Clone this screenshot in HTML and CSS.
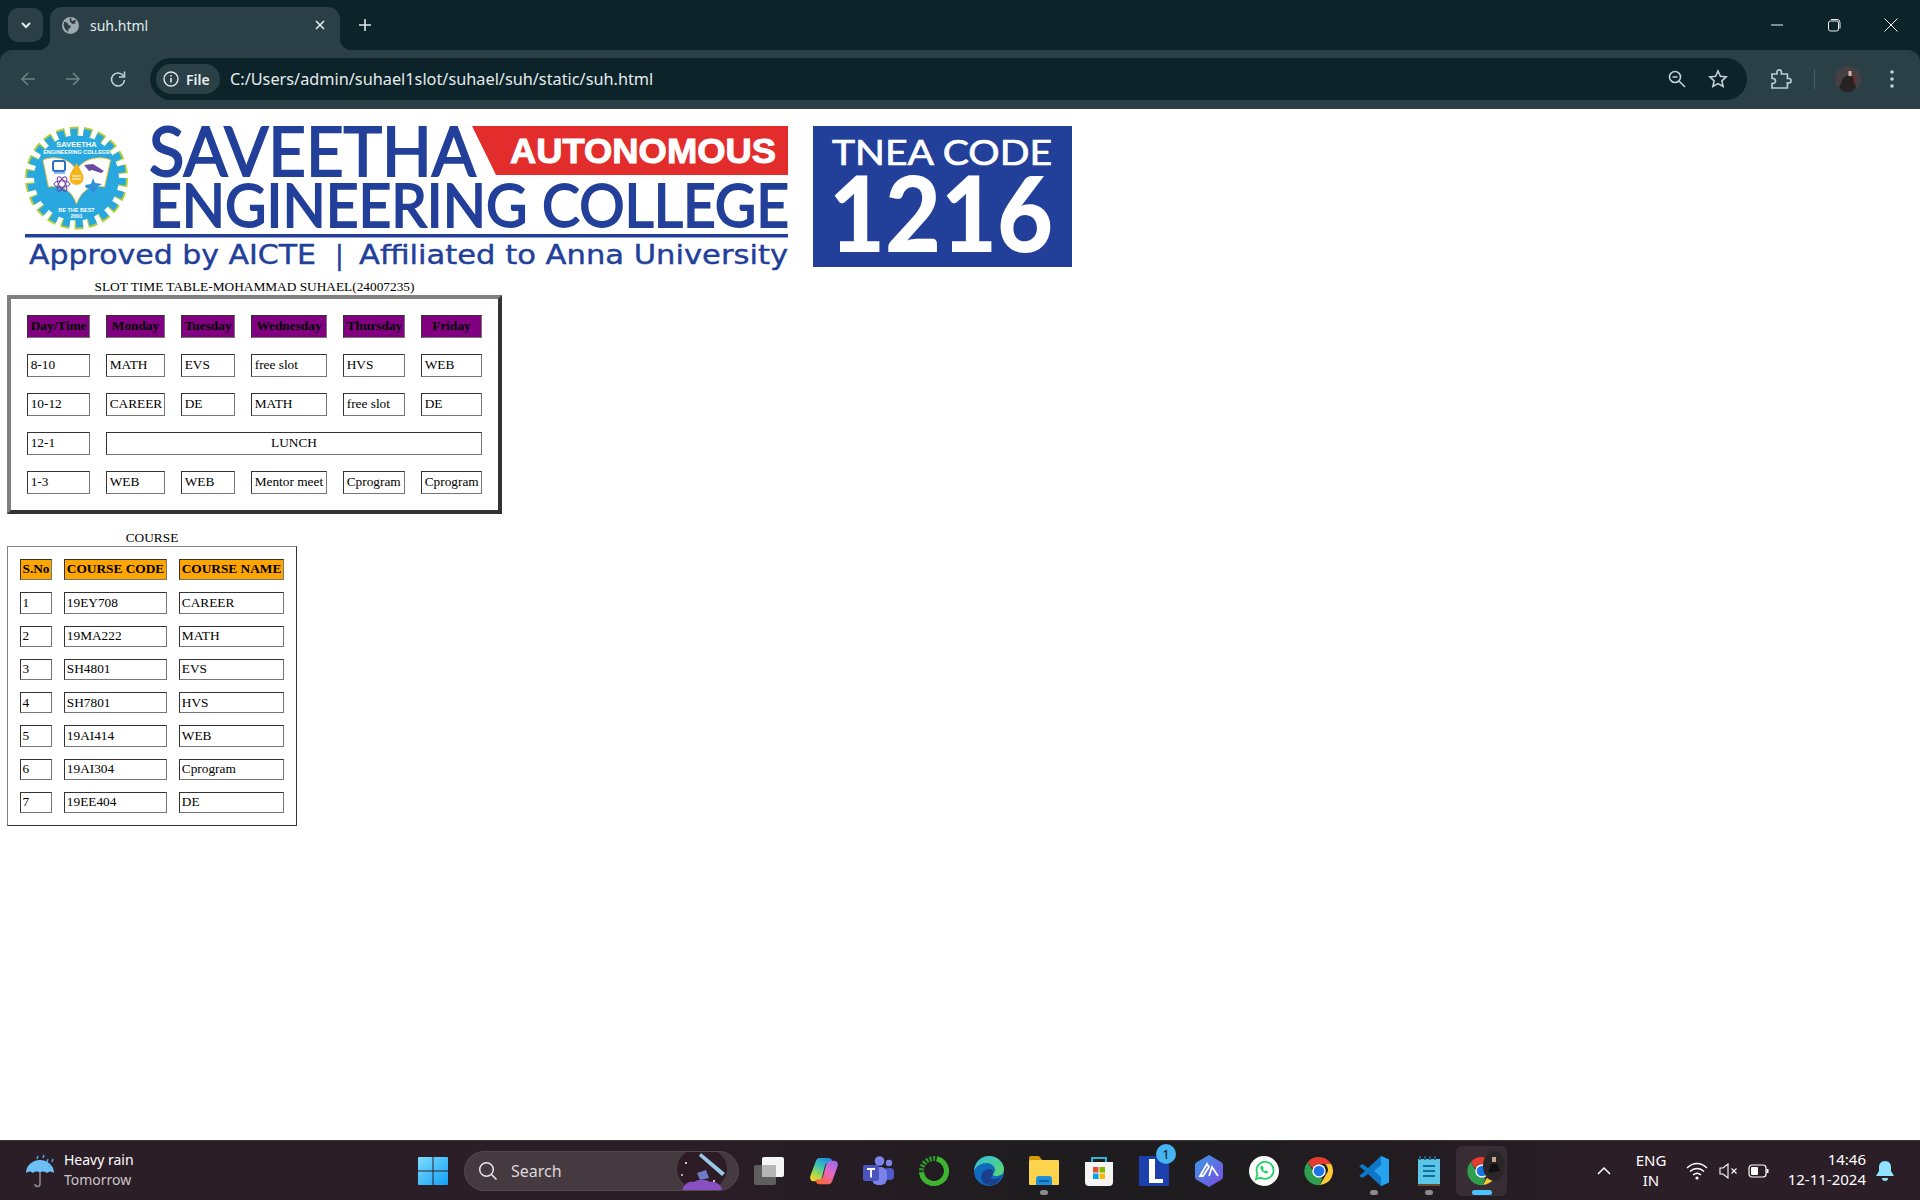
FILE: index.html
```html
<!DOCTYPE html>
<html lang="en">
<head>
    <meta charset="UTF-8">
    <title>suh.html</title>
    <link rel="stylesheet" href="styles.css">
</head>
<body>

<svg class="defs" width="0" height="0">
    <defs>
        <symbol id="chrome-logo" viewBox="0 0 32 32">
            <path d="M16 1a15 15 0 0 1 13 7.500H16a7.500 7.500 0 0 0-7 4.800L4 6.300A15 15 0 0 1 16 1z" fill="#e33b2e"/>
            <path d="M29 8.500A15 15 0 0 1 17 31l6.500-11.200a7.500 7.500 0 0 0-1-11.300z" fill="#fcc934"/>
            <path d="M4 6.300l6.500 11.300a7.500 7.500 0 0 0 9.500 5.300L17 31A15 15 0 0 1 4 6.300z" fill="#2f9e4f"/>
            <circle cx="16" cy="16" r="7.200" fill="#fff"/>
            <circle cx="16" cy="16" r="5.700" fill="#1a73e8"/>
        </symbol>
    </defs>
</svg>

<header class="browser">
    <div class="tabstrip">
        <div class="tab-search">
            <svg width="12" height="12" viewBox="0 0 12 12"><path d="M2 4l4 4 4-4" fill="none" stroke="#e4ecee" stroke-width="2"/></svg>
        </div>
        <div class="tab">
            <svg class="favicon" width="17" height="17" viewBox="0 0 16 16">
                <circle cx="8" cy="8" r="8" fill="#9eaaae"/>
                <path d="M2 4.500l3 1 1 2 2 .5v2l-2 1v3L3 11.500 1.500 8zM9 .8l-.5 2L10.500 4l1-1.500 1.500 .5L12.500 6l-2.500.5L8 5l-1-2.500L8 .8z" fill="#2a4046"/>
            </svg>
            <span class="tab-title">suh.html</span>
            <svg class="tab-close" width="12" height="12" viewBox="0 0 12 12"><path d="M2 2l8 8M10 2l-8 8" stroke="#e4ecee" stroke-width="1.600"/></svg>
        </div>
        <svg class="new-tab" width="16" height="16" viewBox="0 0 16 16"><path d="M8 2v12M2 8h12" stroke="#dfe7e9" stroke-width="1.600"/></svg>
        <div class="window-controls">
            <svg width="46" height="16" viewBox="0 0 46 16"><path d="M17 8h12" stroke="#f2f2f2" stroke-width="1"/></svg>
            <svg width="46" height="16" viewBox="0 0 46 16"><rect x="17.500" y="4" width="10" height="10" rx="2" fill="none" stroke="#f2f2f2"/><path d="M20 2.500h6a3 3 0 0 1 3 3v6" fill="none" stroke="#f2f2f2"/></svg>
            <svg width="46" height="16" viewBox="0 0 46 16"><path d="M16.500 1.500l13 13M29.500 1.500l-13 13" stroke="#f2f2f2" stroke-width="1"/></svg>
        </div>
    </div>
    <div class="toolbar">
        <div class="nav-buttons">
            <svg width="18" height="18" viewBox="0 0 18 18"><path d="M16 9H3M9 3L3 9l6 6" fill="none" stroke="#6f8185" stroke-width="1.600"/></svg>
            <svg width="18" height="18" viewBox="0 0 18 18"><path d="M2 9h13M9 3l6 6-6 6" fill="none" stroke="#6f8185" stroke-width="1.600"/></svg>
            <svg width="18" height="18" viewBox="0 0 18 18"><path d="M14.500 6A6.500 6.500 0 1 0 15.500 10" fill="none" stroke="#c3d2d6" stroke-width="1.600"/><path d="M15.500 1.500v5.500H10" fill="none" stroke="#c3d2d6" stroke-width="1.600"/></svg>
        </div>
        <div class="omnibox">
            <div class="site-chip">
                <svg width="16" height="16" viewBox="0 0 16 16"><circle cx="8" cy="8" r="7" fill="none" stroke="#dfe7e9" stroke-width="1.400"/><path d="M8 7v4.500M8 4v1.600" stroke="#dfe7e9" stroke-width="1.600"/></svg>
                <span>File</span>
            </div>
            <span class="url">C:/Users/admin/suhael1slot/suhael/suh/static/suh.html</span>
            <div class="omni-icons">
                <svg width="18" height="18" viewBox="0 0 18 18"><circle cx="7" cy="7" r="5.500" fill="none" stroke="#c3d2d6" stroke-width="1.600"/><path d="M4.500 7h5M11 11l6 6" stroke="#c3d2d6" stroke-width="1.600"/></svg>
                <svg width="20" height="20" viewBox="0 0 20 20"><path d="M10 2l2.400 5.300 5.800 .6-4.300 3.900 1.200 5.700-5.100-2.900-5.100 2.900 1.200-5.700L1.800 7.900l5.800-.6z" fill="none" stroke="#c3d2d6" stroke-width="1.600"/></svg>
            </div>
        </div>
        <div class="toolbar-right">
            <svg class="puzzle" width="22" height="22" viewBox="0 0 22 22"><path d="M2 6h5V4a2.200 2.200 0 0 1 4.400 0v2h6v4.500h1.500a2.200 2.200 0 0 1 0 4.400h-1.500V20H2v-4.500h1a2.500 2.500 0 0 0 0-5H2z" fill="none" stroke="#b9cace" stroke-width="1.700"/></svg>
            <span class="toolbar-divider"></span>
            <svg class="avatar" width="26" height="26" viewBox="0 0 26 26">
                <circle cx="13" cy="13" r="13" fill="#454042"/>
                <path d="M4 22l4-10 5-3 5 2 3 11-5 4h-7z" fill="#272325"/>
                <rect x="13.500" y="5" width="3" height="5" fill="#d9b7a5"/>
                <path d="M19 9l1.500 5-2 3" fill="none" stroke="#8c2626" stroke-width="1.200"/>
            </svg>
            <svg class="kebab" width="6" height="20" viewBox="0 0 6 20"><circle cx="3" cy="3" r="1.800" fill="#c3d2d6"/><circle cx="3" cy="10" r="1.800" fill="#c3d2d6"/><circle cx="3" cy="17" r="1.800" fill="#c3d2d6"/></svg>
        </div>
    </div>
</header>

<main class="page">
    <svg class="college-banner" width="1080" height="169" viewBox="0 109 1080 169">
        <!-- college seal -->
        <circle cx="76.500" cy="178" r="47" fill="none" stroke="#b5cf3c" stroke-width="9" stroke-dasharray="8.500 4.920"/>
        <circle cx="76.500" cy="178" r="45.500" fill="none" stroke="#29a8e0" stroke-width="8" stroke-dasharray="7 6"/>
        <circle cx="76.500" cy="178" r="42.500" fill="#29a8e0"/>
        <text class="seal-name" x="76.500" y="147" text-anchor="middle">SAVEETHA</text>
        <text class="seal-small" x="76.500" y="153.500" text-anchor="middle">ENGINEERING COLLEGE</text>
        <path d="M43 160c12-5 27-1 33.500 10 6.500-11 22-15 34-10l-6 27c-13-3-23 3-28 17-5-14-15-20-28-17z" fill="#fff" stroke="#f5c342" stroke-width="1"/>
        <path d="M76.500 163c4 7 7 11 7 15a7 7 0 0 1-14 0c0-4 3-8 7-15z" fill="#f5b31c"/>
        <path d="M72 176h9M72 179h9" stroke="#fff" stroke-width="1"/>
        <rect x="53" y="161" width="12" height="10" rx="2" fill="#fff" stroke="#2a72c8" stroke-width="2"/>
        <path d="M54 173h11" stroke="#2a72c8" stroke-width="1"/>
        <g fill="none" stroke="#6a3aa0" stroke-width="1">
            <ellipse cx="62" cy="184" rx="8" ry="3.200"/>
            <ellipse cx="62" cy="184" rx="8" ry="3.200" transform="rotate(60 62 184)"/>
            <ellipse cx="62" cy="184" rx="8" ry="3.200" transform="rotate(120 62 184)"/>
        </g>
        <path d="M84 165l9-1 11 7-3 2-9-3-3 1z" fill="#6a4aa0"/>
        <path d="M85 185l6-1 2-6 2 5 7 1-5 3-3 7-4-5-4-1z" fill="#2f8fd8"/>
        <text class="seal-small" x="76.500" y="212" text-anchor="middle">BE THE BEST</text>
        <text class="seal-small" x="76.500" y="218" text-anchor="middle">2001</text>

        <text class="wordmark" x="149" y="176" font-size="68" textLength="327" lengthAdjust="spacingAndGlyphs">SAVEETHA</text>
        <path d="M472 126h316v49H496z" fill="#e32d2d"/>
        <text class="autonomous" x="510" y="163" font-size="35" textLength="266" lengthAdjust="spacingAndGlyphs">AUTONOMOUS</text>
        <text class="wordmark" x="149" y="227" font-size="60" textLength="640" lengthAdjust="spacingAndGlyphs">ENGINEERING COLLEGE</text>
        <rect x="25" y="234" width="763" height="3.500" fill="#22409a"/>
        <text class="approved" x="29" y="264" font-size="26" textLength="287" lengthAdjust="spacingAndGlyphs">Approved by AICTE</text>
        <text class="approved" x="335" y="264" font-size="26">|</text>
        <text class="approved" x="359" y="264" font-size="26" textLength="429" lengthAdjust="spacingAndGlyphs">Affiliated to Anna University</text>

        <rect x="813" y="126" width="259" height="141" fill="#22409a"/>
        <text class="tnea" x="832" y="165" font-size="35" textLength="220" lengthAdjust="spacingAndGlyphs">TNEA CODE</text>
        <text class="tnea-code" x="829" y="252" font-size="104" textLength="224" lengthAdjust="spacingAndGlyphs">1216</text>
    </svg>

    <table class="slot-table">
        <caption>SLOT TIME TABLE-MOHAMMAD SUHAEL(24007235)</caption>
        <colgroup>
            <col class="col-day"><col class="col-mon"><col class="col-tue"><col class="col-wed"><col class="col-thu"><col class="col-fri">
        </colgroup>
        <tr>
            <th>Day/Time</th><th>Monday</th><th>Tuesday</th><th>Wednesday</th><th>Thursday</th><th>Friday</th>
        </tr>
        <tr>
            <td>8-10</td><td>MATH</td><td>EVS</td><td>free slot</td><td>HVS</td><td>WEB</td>
        </tr>
        <tr>
            <td>10-12</td><td>CAREER</td><td>DE</td><td>MATH</td><td>free slot</td><td>DE</td>
        </tr>
        <tr>
            <td>12-1</td><td colspan="5" class="lunch">LUNCH</td>
        </tr>
        <tr>
            <td>1-3</td><td>WEB</td><td>WEB</td><td>Mentor meet</td><td>Cprogram</td><td>Cprogram</td>
        </tr>
    </table>

    <table class="course-table">
        <caption>COURSE</caption>
        <colgroup>
            <col class="col-sno"><col class="col-code"><col class="col-name">
        </colgroup>
        <tr><th>S.No</th><th>COURSE CODE</th><th>COURSE NAME</th></tr>
        <tr><td>1</td><td>19EY708</td><td>CAREER</td></tr>
        <tr><td>2</td><td>19MA222</td><td>MATH</td></tr>
        <tr><td>3</td><td>SH4801</td><td>EVS</td></tr>
        <tr><td>4</td><td>SH7801</td><td>HVS</td></tr>
        <tr><td>5</td><td>19AI414</td><td>WEB</td></tr>
        <tr><td>6</td><td>19AI304</td><td>Cprogram</td></tr>
        <tr><td>7</td><td>19EE404</td><td>DE</td></tr>
    </table>
</main>

<footer class="taskbar">
    <div class="weather">
        <svg width="32" height="34" viewBox="0 0 32 34">
            <path d="M2 19a14 13 0 0 1 28 0c-2.500-2-5-2-7 0-2.500-2-5.500-2-7 0-2-2-5-2-7 0-2-2-4.500-2-7 0z" fill="#6cc0f5"/>
            <path d="M16 19v11a2.500 2.500 0 0 1-5 0" fill="none" stroke="#8b8f93" stroke-width="1.500"/>
            <path d="M14 2l-1 3M20 1l-1 3M24 5l-1 3M29 5l-1 3M26 11l-1 2" stroke="#4fa6e8" stroke-width="1.500"/>
        </svg>
        <div class="weather-text">
            <span class="weather-now">Heavy rain</span>
            <span class="weather-when">Tomorrow</span>
        </div>
    </div>

    <svg class="start" width="30" height="30" viewBox="0 0 30 30">
        <defs>
            <linearGradient id="win-blue" x1="0" y1="0" x2="1" y2="1"><stop offset="0" stop-color="#7fdcff"/><stop offset="1" stop-color="#10a0f5"/></linearGradient>
        </defs>
        <path d="M1 1h13.500v13.500H0V2a1 1 0 0 1 1-1zM15.500 1H29a1 1 0 0 1 1 1v12.500H15.500zM0 15.500h14.500V29H1a1 1 0 0 1-1-1zM15.500 15.500H30V28a1 1 0 0 1-1 1H15.500z" fill="url(#win-blue)"/>
    </svg>

    <div class="search-pill">
        <svg width="20" height="20" viewBox="0 0 20 20"><circle cx="8.500" cy="8.500" r="6.800" fill="none" stroke="#e8e6e7" stroke-width="1.500"/><path d="M13.500 13.500l5 5" stroke="#e8e6e7" stroke-width="1.600"/></svg>
        <span>Search</span>
        <svg class="search-art" width="52" height="40" viewBox="0 0 52 40">
            <ellipse cx="26" cy="18" rx="25" ry="22" fill="#2d1c26"/>
            <path d="M25 2l24 20-3 3L23 5z" fill="#9cc6e8"/>
            <path d="M21 22l9-3 3 8-9 2z" fill="#6d7cc4"/>
            <path d="M6 40c2-8 8-10 12-9 4-3 12-3 16 0 5-1 11 2 13 9z" fill="#8a4fc0"/>
            <circle cx="10" cy="12" r="1" fill="#fff"/><circle cx="38" cy="30" r="1" fill="#fff"/><circle cx="6" cy="24" r="1" fill="#e8c8ff"/>
        </svg>
    </div>

    <div class="task-apps">
        <div class="task-app">
            <svg width="30" height="28" viewBox="0 0 30 28">
                <rect x="0" y="8" width="22" height="20" rx="2" fill="#5e5e5e"/>
                <rect x="8" y="0" width="22" height="20" rx="2" fill="#f5f5f5"/>
                <rect x="8" y="8" width="14" height="12" rx="1" fill="#b5b5b5"/>
            </svg>
        </div>
        <div class="task-app">
            <svg width="30" height="30" viewBox="0 0 32 32">
                <defs>
                    <linearGradient id="cop-a" x1="0.700" y1="0" x2="0.200" y2="1"><stop offset="0" stop-color="#1f8fe0"/><stop offset=".4" stop-color="#3fc6b0"/><stop offset=".75" stop-color="#a8d84a"/><stop offset="1" stop-color="#f8d030"/></linearGradient>
                    <linearGradient id="cop-b" x1="0.800" y1="0" x2="0.300" y2="1"><stop offset="0" stop-color="#9a6cf0"/><stop offset=".5" stop-color="#e868c0"/><stop offset="1" stop-color="#f8683c"/></linearGradient>
                </defs>
                <path d="M11 2h10c2 0 3 1 3.500 2.500L25 7h-3c-3 0-4.500 1.500-5 3.500L14 22c-1 3-3 5-6 5H5c-3 0-4.500-3-3.500-6L7 6c1-2.500 2-4 4-4z" fill="url(#cop-a)"/>
                <path d="M21 30H11c-2 0-3-1-3.500-2.500L7 25h3c3 0 4.500-1.500 5-3.500L18 10c1-3 3-5 6-5h3c3 0 4.500 3 3.500 6L25 26c-1 2.500-2 4-4 4z" fill="url(#cop-b)"/>
            </svg>
        </div>
        <div class="task-app">
            <svg width="32" height="30" viewBox="0 0 32 30">
                <circle cx="26" cy="7" r="3.200" fill="#7b83eb"/>
                <rect x="21" y="12" width="10" height="12" rx="4" fill="#5059c9"/>
                <circle cx="16.500" cy="5" r="4.800" fill="#7b83eb"/>
                <rect x="9" y="11" width="15" height="18" rx="6" fill="#7b83eb"/>
                <rect x="0" y="9" width="16" height="16" rx="2" fill="#4b53bc"/>
                <path d="M4 13h8M8 13v8.500" stroke="#fff" stroke-width="1.800"/>
            </svg>
        </div>
        <div class="task-app">
            <svg width="32" height="32" viewBox="0 0 32 32">
                <circle cx="16" cy="16" r="12.500" fill="none" stroke="#2f9a2a" stroke-width="5" stroke-dasharray="2.200 1.400"/>
                <circle cx="16" cy="16" r="12.500" fill="none" stroke="#3fb42e" stroke-width="5" stroke-dasharray="53 26" transform="rotate(-75 16 16)"/>
            </svg>
        </div>
        <div class="task-app">
            <svg width="32" height="32" viewBox="0 0 32 32">
                <defs>
                    <linearGradient id="edge-a" x1="0" y1="0" x2="1" y2="1"><stop offset="0" stop-color="#34c0d8"/><stop offset="1" stop-color="#5fd86a"/></linearGradient>
                </defs>
                <circle cx="16" cy="16" r="15" fill="#0f6cbd"/>
                <path d="M1 16C2 6 9 1 16 1c9 0 15 7 15 13 0 5-4 7-8 7-2 0-4-1-4-2 2-1 3-2 3-4 0-4-4-7-8-7C8 8 3 11 1 16z" fill="url(#edge-a)"/>
                <path d="M13 15c2-2 6-1 7 1 1 3-1 6-3 7 4 2 9 1 12-3-2 6-7 11-13 10-5-1-8-4-8-8 0-3 2-6 5-7z" fill="#1b3f8c"/>
            </svg>
        </div>
        <div class="task-app">
            <svg width="32" height="30" viewBox="0 0 32 30">
                <path d="M1 2a2 2 0 0 1 2-2h8l3 4h-13z" fill="#d99a0a"/>
                <rect x="1" y="4" width="30" height="25" rx="1" fill="#fbd34d"/>
                <path d="M8 29v-6a3 3 0 0 1 3-3h10a3 3 0 0 1 3 3v6z" fill="#1f8fd8"/>
                <path d="M11 25h10" stroke="#0d5fa8" stroke-width="2"/>
            </svg>
            <span class="app-pip"></span>
        </div>
        <div class="task-app">
            <svg width="30" height="30" viewBox="0 0 30 30">
                <path d="M8 7V2h14v5" fill="none" stroke="#2fb4d8" stroke-width="2"/>
                <path d="M1 6h28v20a4 4 0 0 1-4 4H5a4 4 0 0 1-4-4z" fill="#f4f4f4"/>
                <rect x="9" y="11" width="5.500" height="5.500" fill="#e8512f"/>
                <rect x="15.500" y="11" width="5.500" height="5.500" fill="#7fba00"/>
                <rect x="9" y="17.500" width="5.500" height="5.500" fill="#00a4ef"/>
                <rect x="15.500" y="17.500" width="5.500" height="5.500" fill="#ffb900"/>
            </svg>
        </div>
        <div class="task-app">
            <svg width="30" height="30" viewBox="0 0 30 30">
                <rect x="0" y="0" width="30" height="30" fill="#1e3fae"/>
                <path d="M10 3h6v20h8v4H10z" fill="#fff"/>
            </svg>
            <span class="app-badge">1</span>
        </div>
        <div class="task-app">
            <svg width="28" height="32" viewBox="0 0 28 32">
                <defs>
                    <linearGradient id="hex-a" x1="0" y1="0" x2="1" y2="1"><stop offset="0" stop-color="#3b9be8"/><stop offset="1" stop-color="#7a4ae0"/></linearGradient>
                </defs>
                <path d="M14 0l12 7c1 .6 2 1.500 2 3v12c0 1.500-1 2.400-2 3l-12 7-12-7c-1-.6-2-1.500-2-3V10c0-1.500 1-2.400 2-3z" fill="url(#hex-a)"/>
                <path d="M5 21l7-12 2 3-6 9zM14 21l3-9 6 9" fill="none" stroke="#fff" stroke-width="1.800"/>
            </svg>
        </div>
        <div class="task-app">
            <svg width="30" height="30" viewBox="0 0 30 30">
                <circle cx="15" cy="15" r="15" fill="#fff"/>
                <path d="M7 23l1.400-5A8.500 8.500 0 1 1 12 21.800z" fill="none" stroke="#25d366" stroke-width="1.800"/>
                <path d="M12 10c-1 1-1 3 1 5s4 3 5.500 2l.7-1.500-2.200-1-1 .7c-1-.5-1.500-1-2-2l.7-1-1-2.200z" fill="#25d366"/>
            </svg>
        </div>
        <div class="task-app">
            <svg width="30" height="30"><use href="#chrome-logo"/></svg>
        </div>
        <div class="task-app">
            <svg width="30" height="30" viewBox="0 0 30 30">
                <path d="M22 0l8 3.500v23L22 30 9 18l-5.500 4L0 20l6-5-6-5 3.500-2L9 12z" fill="#0e78c8"/>
                <path d="M22 0l8 3.500v23L22 30V21l-7-6 7-6z" fill="#25a3ee"/>
            </svg>
            <span class="app-pip"></span>
        </div>
        <div class="task-app">
            <svg width="22" height="30" viewBox="0 0 22 30">
                <rect x="0" y="3" width="22" height="27" fill="#6b4a2e"/>
                <rect x="0" y="3" width="22" height="25" fill="#5cc6e8"/>
                <path d="M5 10h12M5 15h12M5 20h12" stroke="#0d6f9c" stroke-width="2"/>
                <path d="M2 0v4M7 0v4M12 0v4M17 0v4" stroke="#1d5f7c" stroke-width="2"/>
            </svg>
            <span class="app-pip"></span>
        </div>
        <div class="task-app task-app-active">
            <svg width="30" height="30"><use href="#chrome-logo"/></svg>
            <svg class="profile-badge" width="22" height="30" viewBox="0 0 22 30">
                <ellipse cx="11" cy="15" rx="11" ry="15" fill="#2a2627"/>
                <rect x="9" y="6" width="4" height="5" fill="#c9a593"/>
                <path d="M5 22l3-9 6 0 3 7z" fill="#121012"/>
            </svg>
            <span class="app-pip app-pip-active"></span>
        </div>
    </div>

    <div class="tray">
        <svg class="tray-chevron" width="16" height="10" viewBox="0 0 16 10"><path d="M2 8l6-6 6 6" fill="none" stroke="#fff" stroke-width="1.500"/></svg>
        <div class="tray-lang"><span>ENG</span><span>IN</span></div>
        <svg class="tray-wifi" width="22" height="18" viewBox="0 0 22 18">
            <path d="M1 6c6-6 14-6 20 0M4 9.500c4-4 10-4 14 0M7 13c2.500-2.200 5.500-2.200 8 0" fill="none" stroke="#fff" stroke-width="1.300"/>
            <circle cx="11" cy="16" r="1.600" fill="#fff"/>
        </svg>
        <svg class="tray-sound" width="20" height="16" viewBox="0 0 20 16">
            <path d="M1 5h3l5-4v14l-5-4H1z" fill="none" stroke="#fff" stroke-width="1.100"/>
            <path d="M12.500 5.500l5 5M17.500 5.500l-5 5" stroke="#fff" stroke-width="1.100"/>
        </svg>
        <svg class="tray-battery" width="22" height="14" viewBox="0 0 22 14">
            <rect x="1" y="1" width="17" height="12" rx="3" fill="none" stroke="#fff" stroke-width="1.200"/>
            <rect x="3" y="3" width="7" height="8" rx="1" fill="#fff"/>
            <path d="M19.500 5v4" stroke="#fff" stroke-width="2"/>
        </svg>
        <div class="tray-clock"><span>14:46</span><span>12-11-2024</span></div>
        <svg class="tray-bell" width="18" height="20" viewBox="0 0 18 20">
            <path d="M9 0c4 0 6 3 6 6v4l3 5H0l3-5V6c0-3 2-6 6-6z" fill="#8fe3ff"/>
            <path d="M6 17h6a3 3 0 0 1-6 0z" fill="#8fe3ff"/>
        </svg>
    </div>
</footer>

</body>
</html>
```

FILE: styles.css
```css
* {
    box-sizing: border-box;
}
html, body {
    height: 100%;
}
body {
    margin: 0;
    display: flex;
    flex-direction: column;
    height: 1200px;
    overflow: hidden;
    background: #fff;
    font-family: "Noto Sans", sans-serif;
}
svg {
    display: block;
    flex: none;
}
.defs {
    position: absolute;
}

/* browser chrome */
.browser {
    flex: none;
    background: #0c2329;
}
.tabstrip {
    height: 50px;
    display: flex;
    align-items: center;
    padding-left: 8px;
}
.tab-search {
    width: 35px;
    height: 34px;
    border-radius: 10px;
    background: #2a4046;
    display: flex;
    align-items: center;
    justify-content: center;
}
.tab {
    position: relative;
    width: 290px;
    height: 43px;
    margin-top: 7px;
    margin-left: 7px;
    padding: 0 14px 7px 12px;
    border-radius: 12px 12px 0 0;
    background: #2a4046;
    display: flex;
    align-items: center;
}
.tab::before,
.tab::after {
    content: "";
    position: absolute;
    bottom: 0;
    width: 12px;
    height: 12px;
}
.tab::before {
    left: -12px;
    background: radial-gradient(circle at 0 0, transparent 12px, #2a4046 12.500px);
}
.tab::after {
    right: -12px;
    background: radial-gradient(circle at 100% 0, transparent 12px, #2a4046 12.500px);
}
.tab-title {
    margin-left: 11px;
    font-size: 14px;
    color: #e4ecee;
}
.tab-close {
    margin-left: auto;
}
.new-tab {
    margin-left: 17px;
}
.window-controls {
    margin-left: auto;
    display: flex;
    gap: 11px;
    padding-right: 6px;
}
.toolbar {
    height: 59px;
    padding-bottom: 1px;
    background: #2a4046;
    border-radius: 12px 12px 0 0;
    display: flex;
    align-items: center;
}
.nav-buttons {
    width: 150px;
    padding-left: 19px;
    display: flex;
    gap: 27px;
}
.omnibox {
    width: 1597px;
    height: 42px;
    border-radius: 21px;
    background: #0c2329;
    display: flex;
    align-items: center;
    padding-left: 6px;
}
.site-chip {
    width: 64px;
    height: 30px;
    border-radius: 15px;
    background: #2a4046;
    display: flex;
    align-items: center;
    padding-left: 7px;
    gap: 7px;
    font-size: 14px;
    font-weight: 600;
    color: #e8eff1;
}
.url {
    margin-left: 10px;
    font-size: 16.300px;
    color: #e4ecee;
}
.omni-icons {
    margin-left: auto;
    padding-right: 19px;
    display: flex;
    align-items: center;
    gap: 22px;
}
.toolbar-right {
    flex: 1;
    display: flex;
    align-items: center;
    padding-left: 23px;
}
.toolbar-divider {
    width: 1px;
    height: 20px;
    margin-left: 22px;
    background: #4d6267;
}
.avatar {
    margin-left: 20px;
}
.kebab {
    margin-left: 28px;
}

/* page content */
.page {
    flex: 1;
    background: #fff;
    padding-left: 7px;
    font-family: "Liberation Serif", serif;
    font-size: 13.330px;
    color: #000;
}
.college-banner {
    margin-left: -7px;
}
.wordmark {
    font-family: Lato, sans-serif;
    font-weight: 400;
    fill: #22409a;
    stroke: #22409a;
    stroke-width: 1.800px;
}
.autonomous {
    font-family: "Liberation Sans", sans-serif;
    font-weight: 700;
    fill: #fff;
    stroke: #fff;
    stroke-width: 1px;
}
.approved {
    font-family: "DejaVu Sans", sans-serif;
    fill: #22409a;
    stroke: #22409a;
    stroke-width: 0.400px;
}
.tnea {
    font-family: Lato, sans-serif;
    font-weight: 400;
    fill: #fff;
    stroke: #fff;
    stroke-width: 0.700px;
}
.tnea-code {
    font-family: Lato, sans-serif;
    font-weight: 900;
    fill: #fff;
}
.seal-name {
    font-family: "Liberation Sans", sans-serif;
    font-size: 7.500px;
    font-weight: 700;
    fill: #fff;
}
.seal-small {
    font-family: "Liberation Sans", sans-serif;
    font-size: 5.500px;
    font-weight: 700;
    fill: #fff;
}

caption {
    height: 17px;
    line-height: 17px;
}
table {
    table-layout: fixed;
    border-collapse: separate;
}
td, th {
    padding: 0 2.700px 3px;
    border: 1px solid;
    border-color: #333 #777 #777 #333;
    vertical-align: middle;
    line-height: 15px;
    white-space: nowrap;
}
td {
    text-align: left;
}
th {
    text-align: center;
    font-weight: 700;
}

.slot-table {
    width: 495px;
    border-spacing: 16px;
    border: 4px solid;
    border-color: #808080 #333 #333 #808080;
}
.slot-table td, .slot-table th {
    height: 23px;
}
.slot-table th {
    background: #800080;
}
.slot-table .lunch {
    text-align: center;
}
.col-day { width: 63px; }
.col-mon { width: 59px; }
.col-tue { width: 54px; }
.col-wed { width: 76px; }
.col-thu { width: 62px; }
.col-fri { width: 61px; }

.course-table {
    width: 290px;
    margin-top: 15px;
    border-spacing: 12px;
    border: 1px solid;
    border-color: #808080 #333 #333 #808080;
}
.course-table td, .course-table th {
    height: 21.250px;
    padding: 0 1.500px 1px;
}
.course-table th {
    padding-bottom: 3px;
}
.course-table td + td {
    padding-left: 1.800px;
}
.course-table th {
    background: #ffa500;
}
.col-sno { width: 32px; }
.col-code { width: 103px; }
.col-name { width: 105px; }

/* windows taskbar */
.taskbar {
    flex: none;
    height: 60px;
    display: flex;
    align-items: center;
    border-top: 1px solid #3e3339;
    background: linear-gradient(90deg, #2b1e27 0%, #2b1e27 35%, #1e1c1f 55%, #201c20 70%, #2b1e27 85%);
    color: #fff;
}
.weather {
    width: 418px;
    padding-left: 24px;
    display: flex;
    align-items: center;
    gap: 8px;
}
.weather-text {
    display: flex;
    flex-direction: column;
    margin-bottom: 2px;
    font-size: 14px;
    line-height: 20px;
}
.weather-when {
    color: #c9c5c8;
}
.search-pill {
    width: 275px;
    height: 40px;
    margin-left: 16px;
    border-radius: 20px;
    background: #453a40;
    border: 1px solid #55494f;
    display: flex;
    align-items: center;
    padding-left: 13px;
    gap: 13px;
    font-size: 16px;
    color: #dcd8da;
    overflow: hidden;
}
.search-art {
    margin-left: auto;
    margin-right: 10px;
}
.task-apps {
    display: flex;
    margin-left: 2px;
    width: 770px;
}
.task-app {
    position: relative;
    width: 55px;
    height: 50px;
    display: flex;
    align-items: center;
    justify-content: center;
}
.task-app-active {
    border-radius: 6px;
    background: #382d35;
    width: 51px;
}
.app-pip {
    position: absolute;
    left: 50%;
    bottom: 1px;
    width: 8px;
    height: 5px;
    margin-left: -4px;
    border-radius: 3px;
    background: #8d8a8c;
}
.app-pip-active {
    width: 20px;
    margin-left: -10px;
    background: #4cc2ff;
}
.app-badge {
    position: absolute;
    top: -2px;
    left: 30px;
    width: 20px;
    height: 20px;
    border-radius: 50%;
    background: #46b4f0;
    color: #111;
    font-size: 13px;
    line-height: 20px;
    text-align: center;
}
.profile-badge {
    position: absolute;
    top: 5px;
    right: 2px;
}
.tray {
    flex: 1;
    display: flex;
    align-items: center;
    font-size: 15px;
}
.tray-chevron {
    margin-left: 85px;
}
.tray-lang {
    width: 40px;
    margin-left: 19px;
    margin-bottom: 2px;
    display: flex;
    flex-direction: column;
    align-items: center;
    line-height: 20px;
}
.tray-wifi {
    margin-left: 15px;
}
.tray-sound {
    margin-left: 11px;
}
.tray-battery {
    margin-left: 9px;
}
.tray-clock {
    width: 80px;
    margin-left: 16px;
    margin-bottom: 3px;
    display: flex;
    flex-direction: column;
    align-items: flex-end;
    line-height: 20px;
}
.tray-bell {
    margin-left: 10px;
}
```
